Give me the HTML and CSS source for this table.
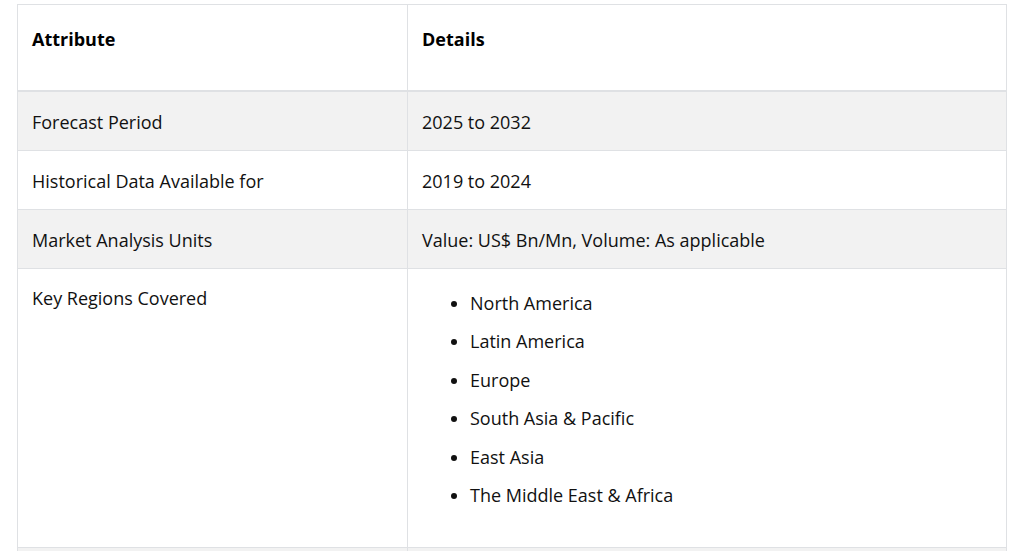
FILE: index.html
```html
<!DOCTYPE html>
<html>
<head>
<meta charset="utf-8">
<link rel="stylesheet" href="styles.css">
</head>
<body>
<div class="wrap">
<table class="attr-table">
  <thead>
    <tr><th class="col1">Attribute</th><th>Details</th></tr>
  </thead>
  <tbody>
    <tr class="alt"><td>Forecast Period</td><td>2025 to 2032</td></tr>
    <tr><td>Historical Data Available for</td><td>2019 to 2024</td></tr>
    <tr class="alt"><td>Market Analysis Units</td><td>Value: US$ Bn/Mn, Volume: As applicable</td></tr>
    <tr class="top"><td>Key Regions Covered</td><td>
      <ul class="regions">
        <li>North America</li>
        <li>Latin America</li>
        <li>Europe</li>
        <li>South Asia &amp; Pacific</li>
        <li>East Asia</li>
        <li>The Middle East &amp; Africa</li>
      </ul>
    </td></tr>
    <tr class="alt"><td class="empty"></td><td class="empty"></td></tr>
  </tbody>
</table>
</div>
</body>
</html>
```
FILE: styles.css
```css
html, body {
  margin: 0;
  padding: 0;
  background: #fff;
}
.wrap {
  padding: 4px 13px 0 17px;
  height: 551px;
  overflow: hidden;
  box-sizing: border-box;
}
.attr-table {
  width: 990px;
  border-collapse: collapse;
  font-family: "Segoe UI", "Open Sans", sans-serif;
  font-size: 18px;
  color: #111;
}
.attr-table th,
.attr-table td {
  border: 1px solid #dfe1e4;
  text-align: left;
  padding: 17px 15px 15px 14px;
  line-height: 26px;
}
.attr-table th {
  font-weight: 700;
  color: #000;
  padding: 21px 15px 38px 14px;
  border-bottom: 2px solid #dfe1e4;
  vertical-align: top;
}
.attr-table .col1 {
  width: 360px;
}
.attr-table tr.alt td {
  background: #f2f2f2;
}
.attr-table tr.top td {
  vertical-align: top;
  padding-top: 16px;
}
.attr-table td.empty {
  height: 26px;
}
.regions {
  margin: 5px 0 24px;
  padding-left: 48px;
}
.regions li {
  margin-bottom: 12.4px;
}
.regions li:last-child {
  margin-bottom: 0;
}
```
